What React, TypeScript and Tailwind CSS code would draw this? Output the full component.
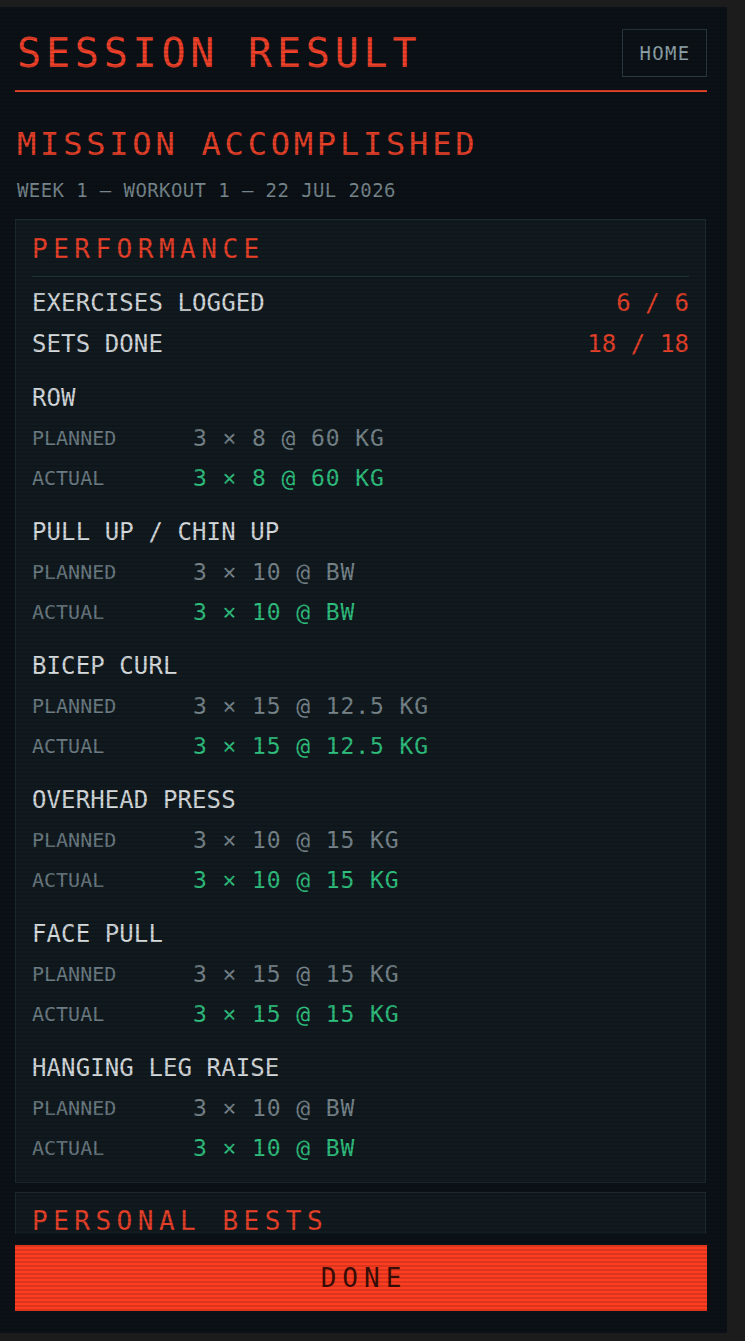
import React from "react";

type Exercise = {
  name: string;
  planned: string;
  actual: string;
};

const exercises: Exercise[] = [
  { name: "ROW", planned: "3 × 8 @ 60 KG", actual: "3 × 8 @ 60 KG" },
  { name: "PULL UP / CHIN UP", planned: "3 × 10 @ BW", actual: "3 × 10 @ BW" },
  { name: "BICEP CURL", planned: "3 × 15 @ 12.5 KG", actual: "3 × 15 @ 12.5 KG" },
  { name: "OVERHEAD PRESS", planned: "3 × 10 @ 15 KG", actual: "3 × 10 @ 15 KG" },
  { name: "FACE PULL", planned: "3 × 15 @ 15 KG", actual: "3 × 15 @ 15 KG" },
  { name: "HANGING LEG RAISE", planned: "3 × 10 @ BW", actual: "3 × 10 @ BW" },
];

function SectionTitle({ children }: { children: React.ReactNode }) {
  return (
    <div className="h-[24px] text-[26px] leading-[24px] tracking-[5.5px] text-[#e8412a]">
      {children}
    </div>
  );
}

function StatRow({ label, value }: { label: string; value: string }) {
  return (
    <div className="flex h-[41px] items-center justify-between text-[24px] tracking-[0.1px]">
      <span className="text-[#d6dbde]">{label}</span>
      <span className="text-[#e8412a]">{value}</span>
    </div>
  );
}

function ExerciseBlock({ ex }: { ex: Exercise }) {
  return (
    <div className="mt-[14px] first:mt-[12px]">
      <div className="flex h-[40px] items-center text-[24px] tracking-[0.1px] text-[#d6dbde]">
        {ex.name}
      </div>
      <div className="flex h-[40px] items-center">
        <span className="w-[161px] text-[20px] text-[#6c7c83]">PLANNED</span>
        <span className="text-[23px] tracking-[0.9px] text-[#77858b]">{ex.planned}</span>
      </div>
      <div className="flex h-[40px] items-center">
        <span className="w-[161px] text-[20px] text-[#6c7c83]">ACTUAL</span>
        <span className="text-[23px] tracking-[0.9px] text-[#2fc07f]">{ex.actual}</span>
      </div>
    </div>
  );
}

export default function App() {
  return (
    <div className="min-h-[1341px] bg-[#1c1c1c] pb-[8px] pr-[18px] pt-[7px]">
      <div className="relative flex h-[1326px] w-[727px] flex-col overflow-hidden bg-[#0b1116] font-['DejaVu_Sans_Mono',monospace]">
        <div className="flex-1 overflow-hidden pl-[15px] pr-[20px]">
          {/* header */}
          <div className="mt-[22px] flex h-[48px] items-center justify-between">
            <h1 className="pl-[2px] text-[40px] leading-[48px] tracking-[4.8px] text-[#f0412a]">
              SESSION RESULT
            </h1>
            <button className="flex h-[48px] w-[85px] items-center justify-center border border-[#2a3a42] pl-[1px] text-[19px] tracking-[1.3px] text-[#8ea2a9]">
              HOME
            </button>
          </div>
          <div className="mt-[13px] h-[2px] bg-[#e8412a]" />

          <div className="mt-[36px] h-[32px] pl-[2px] text-[32px] leading-[32px] tracking-[3.8px] text-[#e8412a]">
            MISSION ACCOMPLISHED
          </div>
          <div className="mt-[20px] h-[20px] pl-[2px] text-[19px] leading-[20px] tracking-[0.4px] text-[#76858b]">
            WEEK 1 — WORKOUT 1 — 22 JUL 2026
          </div>

          {/* performance */}
          <div className="mr-[1px] mt-[19px] border border-[#1d2b31] bg-[#111a1f] px-4 pb-[14px] pt-[17px]">
            <SectionTitle>PERFORMANCE</SectionTitle>
            <div className="mt-[15px] h-px bg-[#1f3238]" />
            <div className="mt-[5px]">
              <StatRow label="EXERCISES LOGGED" value="6 / 6" />
              <StatRow label="SETS DONE" value="18 / 18" />
            </div>
            {exercises.map((ex) => (
              <ExerciseBlock key={ex.name} ex={ex} />
            ))}
          </div>

          {/* personal bests, runs under the footer */}
          <div className="mr-[1px] mt-[9px] h-[120px] border border-[#1d2b31] bg-[#111a1f] px-4 pt-[16px]">
            <SectionTitle>PERSONAL BESTS</SectionTitle>
          </div>
        </div>

        <footer className="h-[99px] shrink-0 bg-[#0b1116] pl-[15px] pr-[20px] pt-[11px]">
          <button className="flex h-[66px] w-full items-center justify-center bg-[#ff3d21] pl-[6px] text-[26px] tracking-[6px] text-[#3a0f08]">
            DONE
          </button>
        </footer>

        {/* scanlines */}
        <div className="pointer-events-none absolute inset-0 bg-[repeating-linear-gradient(to_bottom,transparent_0px,transparent_2px,rgba(0,0,0,0.14)_2px,rgba(0,0,0,0.14)_4px)]" />
      </div>
    </div>
  );
}
